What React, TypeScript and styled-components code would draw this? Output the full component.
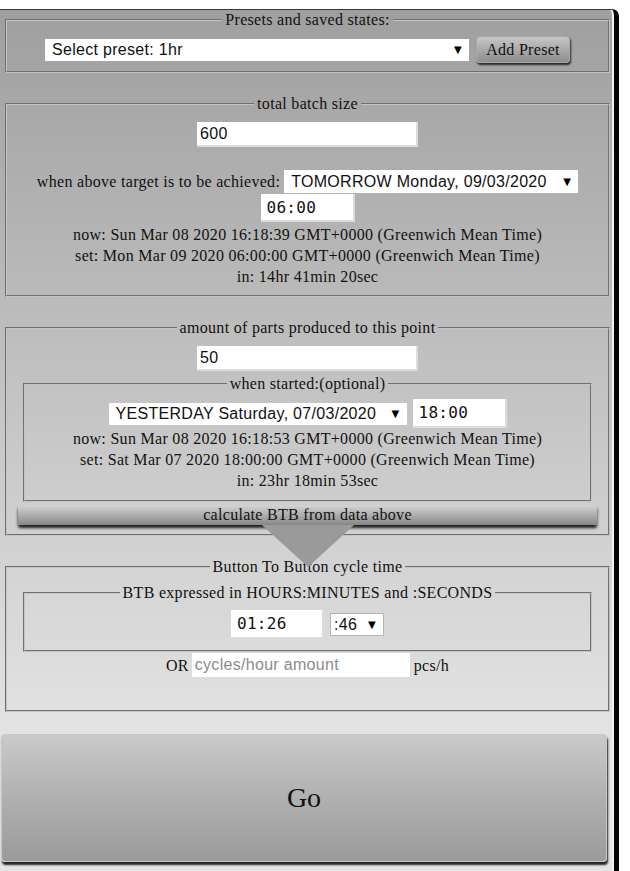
import React from 'react';
import styled, { createGlobalStyle } from 'styled-components';

const GlobalStyle = createGlobalStyle`
  html, body { margin: 0; padding: 0; background: #fff; }
  body {
    font-family: "Liberation Serif", "Times New Roman", serif;
    font-size: 16px;
    color: #111;
  }
`;

const Panel = styled.main`
  box-sizing: border-box;
  width: 619px;
  margin-top: 9px;
  padding: 1px 3px 40px 1px;
  border-top: 1px solid #3a3a3a;
  border-right: 5px solid #050505;
  border-top-right-radius: 7px;
  background: linear-gradient(180deg, #9f9f9f 0px, #e3e3e3 720px, #e4e4e4 100%);
  box-shadow: inset -2px 0 0 #f2f2f2;
  display: flex;
  flex-direction: column;
  gap: 22px;
  letter-spacing: 0.3px;
`;

const Group = styled.fieldset<{ $inner?: boolean; $mt?: number }>`
  margin: ${p => (p.$inner ? `${p.$mt ?? 0}px 2px 0 2px` : '0 1px 0 4px')};
  padding: 0 14px;
  border: 2px groove #c4c4c4;
  min-width: 0;
  position: relative;
`;

const Legend = styled.legend`
  margin: 0 auto;
  padding: 0 3px;
  line-height: 18px;
  font-size: 16px;
`;

const Body = styled.div<{ $pt: number; $pb: number }>`
  display: flex;
  flex-direction: column;
  align-items: center;
  padding: ${p => p.$pt}px 0 ${p => p.$pb}px;
`;

const Row = styled.div<{ $mt?: number; $gap?: number }>`
  display: flex;
  align-items: center;
  justify-content: center;
  gap: ${p => p.$gap ?? 0}px;
  margin-top: ${p => p.$mt ?? 0}px;
  white-space: nowrap;
`;

const TextField = styled.input<{ $w: number; $h: number; $mono?: boolean }>`
  box-sizing: border-box;
  width: ${p => p.$w}px;
  height: ${p => p.$h}px;
  margin: 0;
  padding: 0 0 0 ${p => (p.$mono ? 6 : 3)}px;
  border: none;
  border-right: 2px solid #dcdcdc;
  border-bottom: 2px solid #dcdcdc;
  background: #fff;
  font-family: ${p => (p.$mono ? '"DejaVu Sans Mono", "Liberation Mono", monospace' : '"Liberation Sans", Arial, sans-serif')};
  font-size: 16px;
  letter-spacing: 0.3px;
  color: #111;
  outline: none;
  &::placeholder { color: #8c8c8c; }
`;

const SelectBox = styled.div<{ $w: number; $h: number; $bordered?: boolean }>`
  box-sizing: border-box;
  display: inline-flex;
  align-items: center;
  justify-content: space-between;
  width: ${p => p.$w}px;
  height: ${p => p.$h}px;
  padding: 0 7px 0 ${p => (p.$bordered ? 3 : 7)}px;
  background: #fff;
  border: ${p => (p.$bordered ? '1px solid #b4b4b4' : 'none')};
`;

const NativeSelect = styled.select`
  appearance: none;
  -webkit-appearance: none;
  border: 0;
  margin: 0;
  padding: 0;
  background: transparent;
  font-family: "Liberation Sans", Arial, sans-serif;
  font-size: 16px;
  letter-spacing: 0.3px;
  color: #111;
  outline: none;
`;

const Caret = styled.span`
  font-family: "DejaVu Sans", sans-serif;
  font-size: 10px;
  color: #000;
  line-height: 1;
`;

const Label = styled.span`
  margin-right: 4px;
`;

const InfoLines = styled.div<{ $mt?: number }>`
  margin-top: ${p => p.$mt ?? 0}px;
  line-height: 21px;
  text-align: center;
  white-space: nowrap;
`;

const PresetButton = styled.button`
  box-sizing: border-box;
  width: 94px;
  height: 27px;
  margin: 0;
  padding: 0;
  border: 1px solid #a8a8a8;
  border-radius: 4px;
  background: linear-gradient(180deg, #c6c6c6 0%, #8e8e8e 100%);
  box-shadow: 1px 2px 2px rgba(0, 0, 0, 0.75);
  font-family: "Liberation Serif", "Times New Roman", serif;
  font-size: 16px;
  letter-spacing: 0.3px;
  color: #111;
`;

const CalcButton = styled.button`
  position: relative;
  box-sizing: border-box;
  align-self: stretch;
  margin: 3px -3px 0;
  height: 20px;
  padding: 0;
  border: none;
  border-radius: 2px;
  background: linear-gradient(180deg, #d4d4d4 0%, #a6a6a6 60%, #878787 100%);
  box-shadow: 0 3px 3px rgba(0, 0, 0, 0.85);
  font-family: "Liberation Serif", "Times New Roman", serif;
  font-size: 16px;
  letter-spacing: 0.3px;
  color: #111;
  line-height: 20px;

  &::after {
    content: '';
    position: absolute;
    top: 100%;
    left: 50%;
    margin-left: -46px;
    width: 0;
    height: 0;
    border-left: 46px solid transparent;
    border-right: 46px solid transparent;
    border-top: 42px solid #9a9a9a;
    z-index: 5;
  }
`;

const Addon = styled.span<{ $ml?: number; $mr?: number }>`
  margin-left: ${p => p.$ml ?? 0}px;
  margin-right: ${p => p.$mr ?? 0}px;
`;

const GoButton = styled.button`
  box-sizing: border-box;
  width: 606px;
  height: 128px;
  margin: 0;
  padding: 0;
  border: 1px solid #c8c8c8;
  border-radius: 4px;
  background: linear-gradient(180deg, #cacaca 0%, #b0b0b0 50%, #9b9b9b 100%);
  box-shadow: 1px 3px 2px rgba(0, 0, 0, 0.85);
  font-family: "Liberation Serif", "Times New Roman", serif;
  font-size: 28px;
  color: #111;
`;

type SelectProps = { value: string; w: number; h: number; bordered?: boolean };

const Select: React.FC<SelectProps> = ({ value, w, h, bordered }) => (
  <SelectBox $w={w} $h={h} $bordered={bordered}>
    <NativeSelect defaultValue={value}>
      <option value={value}>{value}</option>
    </NativeSelect>
    <Caret>▼</Caret>
  </SelectBox>
);

export default function App() {
  return (
    <>
      <GlobalStyle />
      <Panel>
        <Group>
          <Legend>Presets and saved states:</Legend>
          <Body $pt={7} $pb={8}>
            <Row $gap={7}>
              <Select value="Select preset: 1hr" w={424} h={22} />
              <PresetButton>Add Preset</PresetButton>
            </Row>
          </Body>
        </Group>

        <Group>
          <Legend>total batch size</Legend>
          <Body $pt={9} $pb={8}>
            <TextField $w={221} $h={25} defaultValue="600" />
            <Row $mt={23}>
              <Label>when above target is to be achieved:</Label>
              <Select value="TOMORROW Monday, 09/03/2020" w={294} h={23} />
            </Row>
            <Row $mt={1}>
              <TextField $w={94} $h={28} $mono defaultValue="06:00" />
            </Row>
            <InfoLines $mt={2}>
              <div>now: Sun Mar 08 2020 16:18:39 GMT+0000 (Greenwich Mean Time)</div>
              <div>set: Mon Mar 09 2020 06:00:00 GMT+0000 (Greenwich Mean Time)</div>
              <div>in: 14hr 41min 20sec</div>
            </InfoLines>
          </Body>
        </Group>

        <Group>
          <Legend>amount of parts produced to this point</Legend>
          <Body $pt={9} $pb={9}>
            <TextField $w={221} $h={25} defaultValue="50" />
            <Group $inner $mt={4} style={{ alignSelf: 'stretch' }}>
              <Legend>when started:(optional)</Legend>
              <Body $pt={6} $pb={9}>
                <Row $gap={6}>
                  <Select value="YESTERDAY Saturday, 07/03/2020" w={298} h={22} />
                  <TextField $w={94} $h={29} $mono defaultValue="18:00" />
                </Row>
                <InfoLines>
                  <div>now: Sun Mar 08 2020 16:18:53 GMT+0000 (Greenwich Mean Time)</div>
                  <div>set: Sat Mar 07 2020 18:00:00 GMT+0000 (Greenwich Mean Time)</div>
                  <div>in: 23hr 18min 53sec</div>
                </InfoLines>
              </Body>
            </Group>
            <CalcButton>calculate BTB from data above</CalcButton>
          </Body>
        </Group>

        <Group>
          <Legend>Button To Button cycle time</Legend>
          <Body $pt={0} $pb={31}>
            <Group $inner $mt={8} style={{ alignSelf: 'stretch' }}>
              <Legend>BTB expressed in HOURS:MINUTES and :SECONDS</Legend>
              <Body $pt={8} $pb={11}>
                <Row $gap={6}>
                  <TextField $w={93} $h={29} $mono defaultValue="01:26" />
                  <Select value=":46" w={54} h={23} bordered />
                </Row>
              </Body>
            </Group>
            <Row $mt={1}>
              <Addon $mr={3}>OR</Addon>
              <TextField $w={220} $h={26} placeholder="cycles/hour amount" />
              <Addon $ml={2}>pcs/h</Addon>
            </Row>
          </Body>
        </Group>

        <GoButton>Go</GoButton>
      </Panel>
    </>
  );
}
